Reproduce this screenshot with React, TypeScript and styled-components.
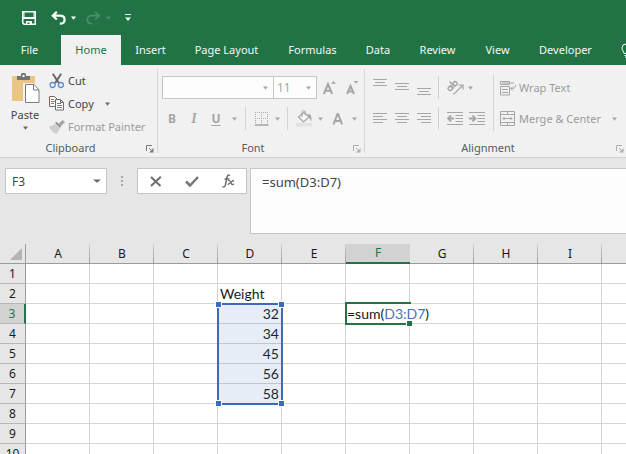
import React from "react";
import styled, { createGlobalStyle, css } from "styled-components";

const GREEN = "#217346";
const BLUE = "#3a6cbd";
const DIM = "#a6a6a6";
const INK = "#444444";

const Global = createGlobalStyle`
  * { box-sizing: border-box; }
  html, body { margin: 0; height: 100%; overflow: hidden; }
  body { font-family: "Noto Sans", "Open Sans", sans-serif; font-size: 12px; color: ${INK}; }
  button, input, select, textarea { font: inherit; color: inherit; margin: 0; padding: 0; border: 0; background: none; border-radius: 0; outline: 0; }
  svg { display: block; flex: none; }
`;

const Window = styled.div`
  display: flex;
  flex-direction: column;
  height: 100vh;
  overflow: hidden;
  background: #e6e6e6;
`;

const QuickBar = styled.header`
  display: flex;
  align-items: center;
  height: 35px;
  padding: 0 22px;
  background: ${GREEN};
`;

const QuickButton = styled.button<{ $gap?: number }>`
  display: flex;
  align-items: center;
  margin-right: ${(p) => p.$gap ?? 0}px;
`;

const TabBar = styled.nav`
  display: flex;
  height: 30px;
  background: ${GREEN};
  overflow: hidden;
`;

const Tab = styled.button<{ $width: number; $active?: boolean }>`
  flex: none;
  width: ${(p) => p.$width}px;
  font-size: 11px;
  line-height: 30px;
  text-align: center;
  white-space: nowrap;
  color: ${(p) => (p.$active ? GREEN : "#f4f8f5")};
  background: ${(p) => (p.$active ? "#f1f1f1" : "transparent")};
`;

const FileTab = styled(Tab)`
  margin-right: 2px;
`;

const TellMe = styled.button`
  flex: none;
  margin-left: 14px;
`;

const Ribbon = styled.section`
  display: flex;
  flex: none;
  height: 93px;
  padding: 4px 0;
  font-size: 11px;
  background: #f1f1f1;
  border-bottom: 1px solid #d2d2d2;
  overflow: hidden;
`;

const Group = styled.div<{ $width: number }>`
  display: flex;
  flex-direction: column;
  flex: none;
  width: ${(p) => p.$width}px;
  border-right: 1px solid #d4d4d4;
`;

const GroupBody = styled.div<{ $left: number }>`
  flex: 1;
  display: flex;
  align-items: flex-start;
  padding-left: ${(p) => p.$left}px;
`;

const GroupFooter = styled.div`
  display: grid;
  grid-template-columns: 1fr 16px;
  align-items: center;
  height: 10px;
  color: #5a5a5a;
  text-align: center;
  line-height: 10px;
`;

const Launcher = styled.button`
  padding: 2px 0 0 5px;
`;

const PasteButton = styled.button`
  display: flex;
  flex-direction: column;
  align-items: center;
  width: 34px;
  padding-top: 4px;
  line-height: 16px;
  gap: 3px;
`;

const ClipList = styled.div`
  display: flex;
  flex-direction: column;
  padding-left: 7px;
`;

const Command = styled.button<{ $dim?: boolean }>`
  display: flex;
  align-items: center;
  gap: 3px;
  height: 23px;
  white-space: nowrap;
  color: ${(p) => (p.$dim ? "#9c9c9c" : INK)};
`;

const CaretSpace = styled.span<{ $left: number }>`
  padding-left: ${(p) => p.$left}px;
`;

const Rows = styled.div`
  display: flex;
  flex-direction: column;
  gap: 8px;
  padding-top: 7px;
`;

const Row = styled.div`
  display: flex;
  align-items: center;
  height: 23px;
`;

const Combo = styled.div<{ $width: number }>`
  display: grid;
  grid-template-columns: 1fr 10px;
  align-items: center;
  width: ${(p) => p.$width}px;
  height: 23px;
  margin-right: -1px;
  background: #fdfdfd;
  border: 1px solid #c6c6c6;
`;

const comboField = css`
  grid-area: 1 / 1 / 2 / 3;
  width: 100%;
  height: 21px;
  padding: 0 4px 0 3px;
  font-size: 12px;
  color: ${DIM};
  appearance: none;
`;

const FontName = styled.input`
  ${comboField}
`;

const FontSize = styled.select`
  ${comboField}
`;

const ComboCaret = styled.span`
  grid-area: 1 / 2;
  pointer-events: none;
`;

const Tool = styled.button<{ $width: number }>`
  display: flex;
  align-items: center;
  justify-content: center;
  width: ${(p) => p.$width}px;
  height: 23px;
  color: ${DIM};
`;

const Letter = styled(Tool)<{ $kind: "b" | "i" | "u" }>`
  font-size: 12px;
  font-weight: 700;
  ${(p) => p.$kind === "i" && css`font-family: "Liberation Serif", serif; font-style: italic; font-size: 14px;`}
  ${(p) => p.$kind === "u" && css`text-decoration: underline; text-underline-offset: 2px;`}
`;

const Divider = styled.span`
  flex: none;
  width: 1px;
  height: 23px;
  margin: 0 8px 0 3px;
  background: #d4d4d4;
`;

const TallDivider = styled.span`
  flex: none;
  width: 1px;
  height: 56px;
  margin: 6px 6px 0 2px;
  background: #d4d4d4;
`;

const Formula = styled.section`
  display: flex;
  flex: none;
  align-items: flex-start;
  height: 86px;
  padding: 10px 0 9px 5px;
`;

const NameBox = styled.div`
  display: flex;
  align-items: center;
  width: 102px;
  height: 26px;
  background: #fff;
  border: 1px solid #c6c6c6;
`;

const NameInput = styled.input`
  flex: 1;
  min-width: 0;
  padding-left: 6px;
`;

const NameCaret = styled.button`
  padding: 0 5px;
`;

const Grip = styled.span`
  display: flex;
  justify-content: center;
  align-items: center;
  width: 30px;
  height: 26px;
`;

const EntryButtons = styled.div`
  display: flex;
  align-items: center;
  width: 110px;
  height: 26px;
  margin-right: 3px;
  background: #fff;
  border: 1px solid #c6c6c6;
`;

const EntryButton = styled.button`
  flex: 1;
  display: flex;
  justify-content: center;
`;

const FormulaText = styled.textarea`
  flex: 1;
  min-width: 0;
  height: 66px;
  padding: 5px 11px;
  font-size: 13px;
  line-height: 16px;
  resize: none;
  background: #fdfdfd;
  border: 1px solid #c6c6c6;
  border-right: 0;
`;

const Sheet = styled.main`
  flex: 1;
  min-height: 0;
  overflow: hidden;
`;

const Grid = styled.table`
  width: 666px;
  min-width: 100%;
  table-layout: fixed;
  border-collapse: separate;
  border-spacing: 0;
  color: #1a1a1a;
`;

const HeadCol = styled.col`
  width: 26px;
`;

const Col = styled.col`
  width: 64px;
`;

const ColHead = styled.th<{ $active?: boolean }>`
  height: 20px;
  padding: 0;
  font-weight: 400;
  line-height: 18px;
  vertical-align: bottom;
  color: ${(p) => (p.$active ? GREEN : "#1a1a1a")};
  background: ${(p) => (p.$active ? "#d2d2d2" : "linear-gradient(#d4d4d4, #9b9b9b) right / 1px 100% no-repeat #e6e6e6")};
  border-bottom: ${(p) => (p.$active ? `2px solid ${GREEN}` : "1px solid #9b9b9b")};
`;

const Corner = styled.th`
  padding: 0 3px 3px 0;
  vertical-align: bottom;
  border-right: 1px solid #9b9b9b;
  border-bottom: 1px solid #9b9b9b;
`;

const CornerMark = styled.svg`
  margin-left: auto;
`;

const RowHead = styled.th<{ $active?: boolean }>`
  height: 20px;
  padding: 0;
  font-weight: 400;
  line-height: 18px;
  vertical-align: bottom;
  color: ${(p) => (p.$active ? GREEN : "#1a1a1a")};
  background: ${(p) => (p.$active ? "#d2d2d2" : "#e6e6e6")};
  border-right: ${(p) => (p.$active ? `2px solid ${GREEN}` : "1px solid #9b9b9b")};
  border-bottom: 1px solid #b6b6b6;
`;

const Cell = styled.td<{ $number?: boolean }>`
  position: relative;
  height: 20px;
  padding: 0 2px;
  font-family: Lato, sans-serif;
  font-size: 14px;
  line-height: 19px;
  white-space: nowrap;
  text-align: ${(p) => (p.$number ? "right" : "left")};
  background: #fff;
  border-right: 1px solid #d4d4d4;
  border-bottom: 1px solid #d4d4d4;
`;

const Range = styled.span`
  position: absolute;
  z-index: 1;
  top: -1px;
  left: -1px;
  right: -2px;
  height: 102px;
  border: 2px solid ${BLUE};
  background: rgba(58, 108, 189, 0.12);
  pointer-events: none;
`;

const RangeHandle = styled.span<{ $v: "top" | "bottom"; $h: "left" | "right" }>`
  position: absolute;
  ${(p) => p.$v}: -4px;
  ${(p) => p.$h}: -4px;
  width: 7px;
  height: 7px;
  background: ${BLUE};
  border: 1px solid #fff;
`;

const Editor = styled.div`
  position: absolute;
  z-index: 2;
  top: -2px;
  left: -1px;
  right: -2px;
  height: 23px;
  border: 2px solid ${GREEN};
  border-right: 0;
`;

const EditorText = styled.div`
  display: inline-block;
  line-height: 19px;
  background: #fff;
  outline: 0;
`;

const Reference = styled.span`
  color: #4a72b8;
`;

const FillHandle = styled.span`
  position: absolute;
  right: -1px;
  bottom: -3px;
  width: 6px;
  height: 5px;
  background: ${GREEN};
  border: 1px solid #fff;
  border-width: 0 0 0 1px;
`;

const Caret = ({ color = "#6a6a6a", size = 5 }: { color?: string; size?: number }) => (
  <svg width={size} height="4" viewBox="0 0 6 4" preserveAspectRatio="none" fill={color}>
    <path d="M0 .5h6L3 3.8z" />
  </svg>
);

const SaveIcon = () => (
  <svg width="14" height="14" viewBox="0 0 14 14" fill="none" stroke="#fff">
    <path d="M.75.75h12.5v12.5H2L.75 12z" strokeWidth="1.5" />
    <path d="M2 1v5M12 1v5" />
    <path d="M1 6h12v2H1z" fill="#fff" stroke="none" />
    <path d="M4 13.5V10h6v3.500z" fill="#fff" stroke="none" />
    <path d="M5.500 11.500h2V13h-2z" fill={GREEN} stroke="none" />
  </svg>
);

const UndoIcon = ({ redo = false }: { redo?: boolean }) => (
  <svg width="15" height="14" viewBox="0 0 15 14" fill="none" stroke={redo ? "#4b8e67" : "#fff"} strokeWidth={redo ? 1.7 : 2.2}>
    <g transform={redo ? "translate(15 0) scale(-1 1)" : undefined}>
      <path d="M5.8.8 1.8 4.7l4 3.8M2 4.7h7c3 0 4.6 1.7 4.6 4 0 2.7-2 4-4.8 4" />
    </g>
  </svg>
);

const CustomizeIcon = () => (
  <svg width="6" height="8" viewBox="0 0 6 8" fill="#fff">
    <path d="M0 0h6v1H0zM0 3.5h6L3 7z" />
  </svg>
);

const BulbIcon = () => (
  <svg width="10" height="15" viewBox="0 0 10 15" fill="none" stroke="#fff">
    <path d="M3 10.5C3 8.500 1 7.500 1 5a4 4 0 0 1 8 0c0 2.500-2 3.500-2 5.500zM3.500 12.500h3M4 14h2" />
  </svg>
);

const PasteIcon = () => (
  <svg width="30" height="31" viewBox="0 0 30 31">
    <path d="M3 3h21a1 1 0 0 1 1 1v24H3a1 1 0 0 1-1-1V4a1 1 0 0 1 1-1z" fill="#eac583" />
    <path d="M7 3h4V1.500Q11 0 12.500 0h2Q16 0 16 1.500V3h4v4H7z" fill="#737373" />
    <path d="M12.500 2h2v2h-2z" fill="#fff" />
    <path d="M14.500 11.500H23l5.500 5.500v12.500h-14z" fill="#fff" stroke="#f1f1f1" strokeWidth="3" />
    <path d="M15.500 11.500H24l5 5.500v12.500H15.500z" fill="#fff" stroke="#7d7d7d" />
    <path d="M23.500 11.500V17H29" fill="none" stroke="#7d7d7d" />
  </svg>
);

const CutIcon = () => (
  <svg width="16" height="16" viewBox="0 0 16 16" fill="none">
    <path d="M3.800.8 10 10.200M12.200.8 6 10.200" stroke="#666" strokeWidth="2" />
    <circle cx="3.600" cy="12" r="2.500" stroke="#5b90d0" strokeWidth="1.300" />
    <circle cx="11.900" cy="12" r="2.500" stroke="#5b90d0" strokeWidth="1.300" />
  </svg>
);

const CopyIcon = () => (
  <svg width="16" height="15" viewBox="0 0 16 15" fill="#fff" stroke="#6b6b6b">
    <path d="M.5.5h5l3 3v7h-8z" />
    <path d="M2 3.500h3M2 5.500h4M2 7.500h3" stroke="#5588b8" />
    <path d="M6.500 3.500h5l3 3v7.500h-8z" />
    <path d="M11.500 3.500v3h3" fill="none" />
    <path d="M8 7.500h4M8 9.500h5M8 11.500h5" stroke="#5588b8" />
  </svg>
);

const PainterIcon = () => (
  <svg width="16" height="14" viewBox="0 0 16 14">
    <path d="M0 7 6 4l5 5-4 5-2-1 1-2-2 1.500L2.500 11l1-1.500L2 10z" fill="#d0cccd" />
    <path d="m6 3 1.500-1.200L12 6.200 10.800 8z" fill="#8f8f8f" />
    <path d="m9.500 3.500 4-3.500L16 2l-4 4.200z" fill="#a6a6a6" />
  </svg>
);

const LauncherIcon = ({ color = "#7a7a7a" }: { color?: string }) => (
  <svg width="8" height="8" viewBox="0 0 8 8" fill="none" stroke={color}>
    <path d="M.5 6V.5H6M3 3l3.500 3.500" />
    <path d="M7.500 3v4.500H3z" fill={color} stroke="none" />
  </svg>
);

const SizeIcon = ({ down = false }: { down?: boolean }) => (
  <svg width="13" height="14" viewBox="0 0 13 14" fill={DIM}>
    <path
      d={down ? "M1 13 4.500 5 8 13M2.200 10.500h4.600" : "M.8 13 5 3 9.200 13M2.300 9.800h5.400"}
      fill="none"
      stroke={DIM}
      strokeWidth="2"
    />
    <path d={down ? "M7.500 0h5L10 2.700z" : "M8 2.700h5L10.500 0z"} />
  </svg>
);

const BordersIcon = () => (
  <svg width="14" height="14" viewBox="0 0 14 14" fill="none" stroke="#b0a6ae" strokeDasharray="1 1">
    <path d="M.5 0v13M6.500 0v13M12.500 0v13M0 .5h13M0 6.500h13" />
    <path d="M0 13h13.500" strokeDasharray="none" stroke={DIM} strokeWidth="1.500" />
  </svg>
);

const BucketIcon = () => (
  <svg width="17" height="17" viewBox="0 0 17 17" fill="none" stroke={DIM}>
    <path d="M0 13h16v3.500H0z" fill="#e4e0e3" stroke="none" />
    <path d="m8 2.500 5 4.500-5.500 5-5-5z" fill="#f7f7f7" strokeWidth="1.200" />
    <path d="M6 7V2.200a1.600 1.600 0 0 1 3.200 0V5" />
    <path d="M11.500 4C15 4 16 6.500 15.200 11.500c-1-1-1.200-3-2.200-4.500z" fill={DIM} stroke="none" />
  </svg>
);

const FontColorIcon = () => (
  <svg width="12" height="12" viewBox="0 0 12 12" fill="none" stroke={DIM} strokeWidth="2">
    <path d="M1.500 11.500 5.500 1h.6l4 10.500M3 8h5.600" />
  </svg>
);

type LineSpec = [number, number];
const LinesIcon = ({ lines, top = 0 }: { lines: LineSpec[]; top?: number }) => (
  <svg width="14" height="23" viewBox="0 0 14 23" stroke={DIM}>
    {lines.map(([from, to], i) => (
      <path key={i} d={`M${from} ${top + i * 3 + 0.5}H${to}`} />
    ))}
  </svg>
);

const OrientationIcon = () => (
  <svg width="17" height="17" viewBox="0 0 17 17" fill="none" stroke={DIM} strokeWidth="1.400">
    <g transform="rotate(-45 5 7)">
      <circle cx="2" cy="7.500" r="2" />
      <path d="M4.400 5v5M6.500 2v8" />
      <circle cx="8.800" cy="7.500" r="2" />
    </g>
    <path d="m6.500 15.500 9-9M11.500 6h4.500v4.500" strokeWidth="1.200" />
  </svg>
);

const IndentIcon = ({ more = false }: { more?: boolean }) => (
  <svg width="16" height="14" viewBox="0 0 16 14" fill="none" stroke={DIM}>
    <path d="M0 .5h16M8.500 3.500H16M8.500 6.500H16M8.500 9.500H16M0 12.500h16" />
    <path d={more ? "M0 6.500h6M3.500 3.500l3 3-3 3" : "M7 6.500H1M4 3.500l-3 3 3 3"} strokeWidth="1.800" />
  </svg>
);

const WrapIcon = () => (
  <svg width="16" height="16" viewBox="0 0 16 16" fill="none" stroke={DIM}>
    <path d="M.5 1.500h9v3h-9zM.5 6.500h9v8.500h-9zM2 3h12M2 9.500h6M2 12.500h6M15.500 5c0 3-1.500 3.500-4.500 3.500M12.800 6.500l-2 2 2 2" />
  </svg>
);

const MergeIcon = () => (
  <svg width="16" height="16" viewBox="0 0 16 16" fill="none" stroke={DIM}>
    <path d="M.5.5h14v14H.5zM.5 3.500h14M.5 11.500h14M7.500.5v3M7.500 11.500v3M3 7.500h9M4.500 6 3 7.500 4.500 9M10.500 6 12 7.500 10.500 9" />
  </svg>
);

const CancelIcon = () => (
  <svg width="12" height="11" viewBox="0 0 12 11" fill="none" stroke="#6e6e6e" strokeWidth="2">
    <path d="m1 1 9.500 9M10.800.8 1 10" />
  </svg>
);

const EnterIcon = () => (
  <svg width="14" height="11" viewBox="0 0 14 11" fill="none" stroke="#757575" strokeWidth="2.500">
    <path d="m1 5.500 4 4L13 1" />
  </svg>
);

const FunctionIcon = () => (
  <svg width="13" height="14" viewBox="0 0 13 14" fill="none" stroke="#6e6e6e">
    <path d="M8 1.500C6.200.3 5.300 1.500 4.900 3.500L3.500 10.500C3.200 12.500 2 13.500.5 12.500M2.500 5h5" strokeWidth="1.500" />
    <path d="M6 6.500c2-.5 2.500 1 3 2.500s1.500 2 3 1M12 6.500c-2-.3-4.500 4-6.500 3.800" strokeWidth="1.300" />
  </svg>
);

const GripIcon = () => (
  <svg width="2" height="10" viewBox="0 0 2 10" fill="#a8a8a8">
    <path d="M0 0h2v2H0zM0 4h2v2H0zM0 8h2v2H0z" />
  </svg>
);

const tabs: [string, number][] = [
  ["Home", 60],
  ["Insert", 59],
  ["Page Layout", 93],
  ["Formulas", 79],
  ["Data", 52],
  ["Review", 67],
  ["View", 53],
  ["Developer", 83],
];

const columns = ["A", "B", "C", "D", "E", "F", "G", "H", "I", ""];
const rows = Array.from({ length: 10 }, (_, i) => i + 1);
const values: Record<string, string | number> = { D2: "Weight", D3: 32, D4: 34, D5: 45, D6: 56, D7: 58 };

const alignments: { name: string; lines: LineSpec[]; top: number }[][] = [
  [
    { name: "Top align", lines: [[0, 14], [2, 12], [0, 14]], top: 3 },
    { name: "Middle align", lines: [[0, 14], [2, 12], [0, 14]], top: 7 },
    { name: "Bottom align", lines: [[0, 14], [2, 12], [0, 14]], top: 12 },
  ],
  [
    { name: "Align left", lines: [[0, 14], [0, 10], [0, 14], [0, 10]], top: 6 },
    { name: "Center", lines: [[0, 14], [2, 12], [0, 14], [2, 12]], top: 6 },
    { name: "Align right", lines: [[0, 14], [4, 14], [0, 14], [4, 14]], top: 6 },
  ],
];

const AlignTools = ({ row }: { row: number }) => (
  <>
    {alignments[row].map((a) => (
      <Tool key={a.name} $width={22} aria-label={a.name}>
        <LinesIcon lines={a.lines} top={a.top} />
      </Tool>
    ))}
  </>
);

const Footer = ({ name, dim }: { name: string; dim?: boolean }) => (
  <GroupFooter>
    <span>{name}</span>
    <Launcher aria-label={`${name} settings`}>
      <LauncherIcon color={dim ? "#b0b0b0" : undefined} />
    </Launcher>
  </GroupFooter>
);

export default function App() {
  return (
    <Window>
      <Global />
      <QuickBar>
        <QuickButton aria-label="Save" $gap={15}><SaveIcon /></QuickButton>
        <QuickButton aria-label="Undo" $gap={5}><UndoIcon /></QuickButton>
        <QuickButton aria-label="Undo history" $gap={10}><Caret color="#fff" /></QuickButton>
        <QuickButton aria-label="Redo" $gap={5}><UndoIcon redo /></QuickButton>
        <QuickButton aria-label="Redo history" $gap={14}><Caret color="#4b8e67" /></QuickButton>
        <QuickButton aria-label="Customize toolbar"><CustomizeIcon /></QuickButton>
      </QuickBar>
      <TabBar>
        <FileTab $width={59}>File</FileTab>
        {tabs.map(([name, width]) => (
          <Tab key={name} $width={width} $active={name === "Home"}>{name}</Tab>
        ))}
        <TellMe aria-label="Tell me"><BulbIcon /></TellMe>
      </TabBar>

      <Ribbon>
        <Group $width={158}>
          <GroupBody $left={8}>
            <PasteButton>
              <PasteIcon />
              Paste
              <Caret />
            </PasteButton>
            <ClipList>
              <Command><CutIcon />Cut</Command>
              <Command><CopyIcon />Copy<CaretSpace $left={8}><Caret /></CaretSpace></Command>
              <Command $dim><PainterIcon />Format Painter</Command>
            </ClipList>
          </GroupBody>
          <Footer name="Clipboard" />
        </Group>

        <Group $width={207}>
          <GroupBody $left={4}>
            <Rows>
              <Row>
                <Combo $width={112}>
                  <FontName aria-label="Font" />
                  <ComboCaret><Caret color={DIM} /></ComboCaret>
                </Combo>
                <Combo $width={44}>
                  <FontSize aria-label="Font size" defaultValue="11"><option>11</option></FontSize>
                  <ComboCaret><Caret color={DIM} /></ComboCaret>
                </Combo>
                <Tool $width={26} aria-label="Increase font size"><SizeIcon /></Tool>
                <Tool $width={20} aria-label="Decrease font size"><SizeIcon down /></Tool>
              </Row>
              <Row>
                <Letter $kind="b" $width={20}>B</Letter>
                <Letter $kind="i" $width={24}>I</Letter>
                <Letter $kind="u" $width={20}>U</Letter>
                <Tool $width={16} aria-label="Underline options"><Caret color={DIM} /></Tool>
                <Divider />
                <Tool $width={16} aria-label="Borders"><BordersIcon /></Tool>
                <Tool $width={14} aria-label="Border options"><Caret color={DIM} /></Tool>
                <Divider />
                <Tool $width={16} aria-label="Fill color"><BucketIcon /></Tool>
                <Tool $width={16} aria-label="Fill options"><Caret color={DIM} /></Tool>
                <Tool $width={20} aria-label="Font color"><FontColorIcon /></Tool>
                <Tool $width={12} aria-label="Font color options"><Caret color={DIM} /></Tool>
              </Row>
            </Rows>
          </GroupBody>
          <Footer name="Font" dim />
        </Group>

        <Group $width={263}>
          <GroupBody $left={4}>
            <Rows>
              <Row>
                <AlignTools row={0} />
                <Divider />
                <Tool $width={17} aria-label="Orientation"><OrientationIcon /></Tool>
                <Tool $width={12} aria-label="Orientation options"><Caret color={DIM} /></Tool>
              </Row>
              <Row>
                <AlignTools row={1} />
                <Divider />
                <Tool $width={16} aria-label="Decrease indent"><IndentIcon /></Tool>
                <Tool $width={28} aria-label="Increase indent"><IndentIcon more /></Tool>
              </Row>
            </Rows>
            <TallDivider />
            <Rows>
              <Command $dim><WrapIcon />Wrap Text</Command>
              <Command $dim><MergeIcon />Merge &amp; Center<CaretSpace $left={8}><Caret color={DIM} /></CaretSpace></Command>
            </Rows>
          </GroupBody>
          <Footer name="Alignment" dim />
        </Group>
      </Ribbon>

      <Formula>
        <NameBox>
          <NameInput aria-label="Name box" defaultValue="F3" />
          <NameCaret aria-label="Name list"><Caret size={8} /></NameCaret>
        </NameBox>
        <Grip><GripIcon /></Grip>
        <EntryButtons>
          <EntryButton aria-label="Cancel"><CancelIcon /></EntryButton>
          <EntryButton aria-label="Enter"><EnterIcon /></EntryButton>
          <EntryButton aria-label="Insert function"><FunctionIcon /></EntryButton>
        </EntryButtons>
        <FormulaText aria-label="Formula bar" defaultValue="=sum(D3:D7)" />
      </Formula>

      <Sheet>
        <Grid>
          <colgroup>
            <HeadCol />
            {columns.map((c, i) => <Col key={i} />)}
          </colgroup>
          <thead>
            <tr>
              <Corner aria-label="Select all">
                <CornerMark width="12" height="12" viewBox="0 0 12 12"><path d="M12 0v12H0z" fill="#b4b4b4" /></CornerMark>
              </Corner>
              {columns.map((c, i) => (
                <ColHead key={i} scope="col" $active={c === "F"}>{c}</ColHead>
              ))}
            </tr>
          </thead>
          <tbody>
            {rows.map((r) => (
              <tr key={r}>
                <RowHead scope="row" $active={r === 3}>{r}</RowHead>
                {columns.map((c, i) => {
                  const id = `${c}${r}`;
                  const value = values[id];
                  return (
                    <Cell key={i} $number={typeof value === "number"}>
                      {value}
                      {id === "D3" && (
                        <Range>
                          <RangeHandle $v="top" $h="left" />
                          <RangeHandle $v="top" $h="right" />
                          <RangeHandle $v="bottom" $h="left" />
                          <RangeHandle $v="bottom" $h="right" />
                        </Range>
                      )}
                      {id === "F3" && (
                        <Editor>
                          <EditorText role="textbox" aria-label="F3" contentEditable suppressContentEditableWarning>
                            =sum(<Reference>D3:D7</Reference>)
                          </EditorText>
                          <FillHandle />
                        </Editor>
                      )}
                    </Cell>
                  );
                })}
              </tr>
            ))}
          </tbody>
        </Grid>
      </Sheet>
    </Window>
  );
}
